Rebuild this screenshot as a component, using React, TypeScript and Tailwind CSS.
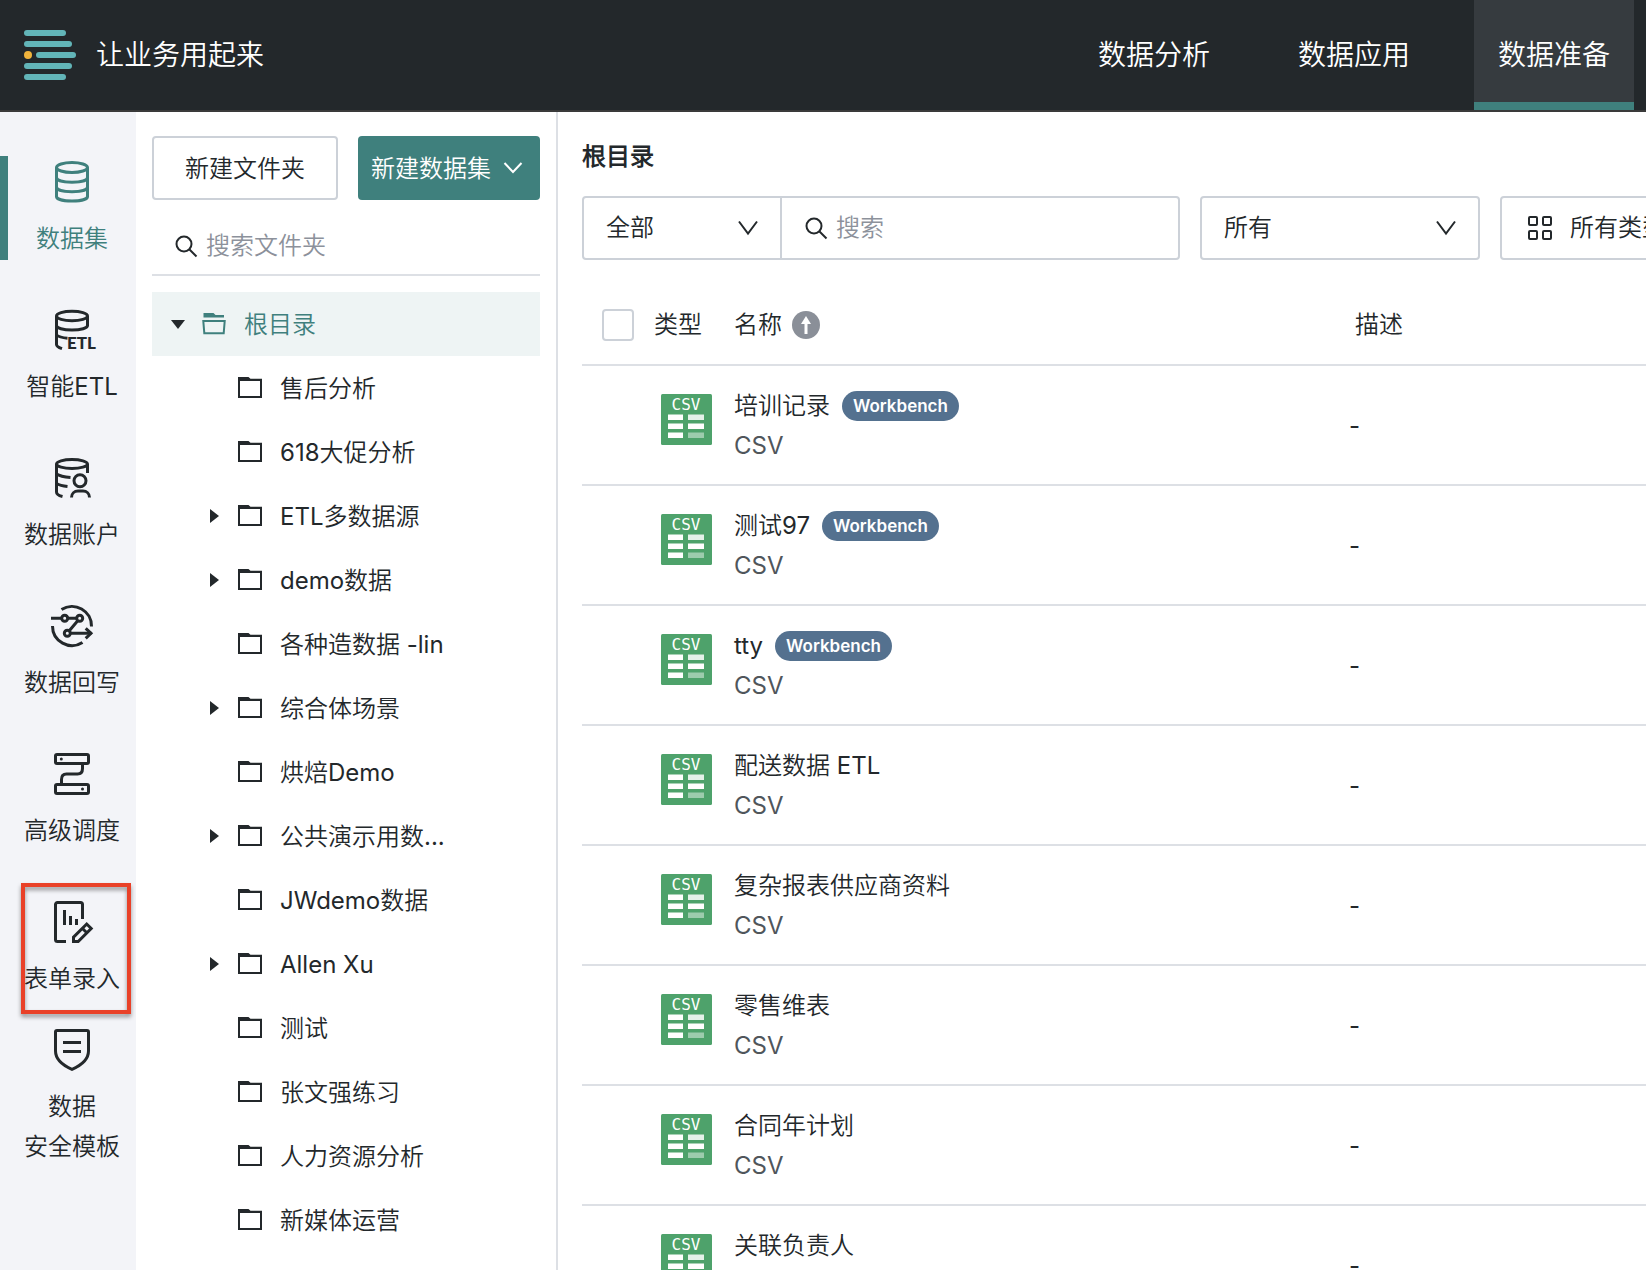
import type { ReactNode } from "react";
import clsx from "clsx";

const NAV_ITEMS = [
  { label: "数据分析", active: false },
  { label: "数据应用", active: false },
  { label: "数据准备", active: true },
];

interface SideItem {
  lines: string[];
  icon: ReactNode;
  active?: boolean;
  marked?: boolean;
}

const SIDE_ITEMS: SideItem[] = [
  {
    lines: ["数据集"],
    active: true,
    icon: (
      <>
        <ellipse cx="22" cy="7.5" rx="15.5" ry="5" />
        <path d="M6.5 7.5v29c0 2.6 6.5 4.5 15.5 4.5s15.5-1.9 15.5-4.5v-29" />
        <path d="M6.5 17.5c0 2.8 6.5 4.7 15.5 4.7s15.5-1.9 15.5-4.7" />
        <path d="M6.5 27c0 2.8 6.5 4.7 15.5 4.7s15.5-1.9 15.5-4.7" />
      </>
    ),
  },
  {
    lines: ["智能ETL"],
    icon: (
      <>
        <ellipse cx="22" cy="8" rx="15.5" ry="4.7" />
        <path d="M37.5 8v9.5c0 2.5-6.5 4.5-15.5 4.5S6.5 20 6.5 17.5" />
        <path d="M6.5 8v28.5c0 2 2 3 5.5 4.2M6.5 27c2 1.8 6 2.8 11 3.2" />
        <text
          className="font-['Lato',sans-serif] text-[17px] font-black"
          fill="currentColor"
          stroke="none"
          x="17"
          y="41"
        >
          ETL
        </text>
      </>
    ),
  },
  {
    lines: ["数据账户"],
    icon: (
      <>
        <ellipse cx="22" cy="8" rx="15.5" ry="4.5" />
        <path d="M37.5 8v9M6.5 8v28c0 2.5 2 3.5 6 4.5" />
        <path d="M6.5 18c3 2 8 3 14 3.5M6.5 27.5c3 1.8 6.5 2.5 11 3" />
        <circle cx="30" cy="24.7" r="6" />
        <path d="M21.5 41.5c0-4 3-6.5 6.5-6.5h5c3.5 0 6.5 2.5 6.5 6.5" />
      </>
    ),
  },
  {
    lines: ["数据回写"],
    icon: (
      <>
        <path d="M11.5 5.5A19.5 19.5 0 0 1 41.5 22.5" />
        <path d="M2.5 22A19.5 19.5 0 0 0 32.5 38.5" />
        <path d="M1 14.3h10.5M18 14.3h8.5M27.5 17l-8 9.5M20.5 29.3h21" />
        <path d="M35.7 24.3l5.3 5-5.3 5" />
        <circle cx="14.7" cy="14.3" r="3" />
        <circle cx="29.7" cy="14.3" r="3" />
        <circle cx="17.3" cy="29.3" r="3" />
      </>
    ),
  },
  {
    lines: ["高级调度"],
    icon: (
      <>
        <rect height="9" rx="1.5" width="33" x="5.5" y="2.5" />
        <rect height="9" rx="1.5" width="33" x="5.5" y="32.5" />
        <path d="M32.5 12v4.5c0 3.5-1.5 5.5-5 5.5h-11c-3.5 0-5 2-5 5.5V32" />
        <circle cx="11.3" cy="7" fill="currentColor" r="1.5" stroke="none" />
        <circle cx="32.5" cy="37" fill="currentColor" r="1.5" stroke="none" />
      </>
    ),
  },
  {
    lines: ["表单录入"],
    marked: true,
    icon: (
      <>
        <path d="M32.5 19V4.5a2 2 0 0 0-2-2h-23a2 2 0 0 0-2 2v35a2 2 0 0 0 2 2H16" />
        <path d="M14.5 10v15M20.5 16v9M26.5 19v6" />
        <path d="M23.5 41.5v-4.3L36.7 24l4.5 4.5-13 13z" />
        <path d="M32.5 28.5l4.3 4.3" />
      </>
    ),
  },
  {
    lines: ["数据", "安全模板"],
    icon: (
      <>
        <path d="M7 2.5h30A1.5 1.5 0 0 1 38.5 4v19c0 9-6.5 14-16.5 18.3C12 37 5.5 32 5.5 23V4A1.5 1.5 0 0 1 7 2.5z" />
        <path d="M13 14.5h18M13 23.5h18" />
      </>
    ),
  },
];

const FOLDERS = [
  { name: "售后分析", expandable: false },
  { name: "618大促分析", expandable: false },
  { name: "ETL多数据源", expandable: true },
  { name: "demo数据", expandable: true },
  { name: "各种造数据 -lin", expandable: false },
  { name: "综合体场景", expandable: true },
  { name: "烘焙Demo", expandable: false },
  { name: "公共演示用数...", expandable: true },
  { name: "JWdemo数据", expandable: false },
  { name: "Allen Xu", expandable: true },
  { name: "测试", expandable: false },
  { name: "张文强练习", expandable: false },
  { name: "人力资源分析", expandable: false },
  { name: "新媒体运营", expandable: false },
];

const DATASETS = [
  { name: "培训记录", workbench: true },
  { name: "测试97", workbench: true },
  { name: "tty", workbench: true },
  { name: "配送数据 ETL", workbench: false },
  { name: "复杂报表供应商资料", workbench: false },
  { name: "零售维表", workbench: false },
  { name: "合同年计划", workbench: false },
  { name: "关联负责人", workbench: false },
];

function Logo() {
  return (
    <svg className="h-[50px] w-[52px]" fill="#62b5b8" viewBox="0 0 52 50">
      <rect height="6" rx="3" width="42" />
      <rect height="6" rx="3" width="48" y="11" />
      <rect height="6" rx="3" width="40" x="12" y="22" />
      <rect height="6" rx="3" width="48" y="33" />
      <rect height="6" rx="3" width="42" y="44" />
      <circle cx="4" cy="25" fill="#f0b43c" r="4" />
    </svg>
  );
}

function SearchIcon() {
  return (
    <svg
      className="size-6 shrink-0"
      fill="none"
      stroke="currentColor"
      strokeWidth="2"
      viewBox="0 0 24 24"
    >
      <circle cx="10" cy="10" r="7.5" />
      <path d="M15.5 15.5l7 7" />
    </svg>
  );
}

function Chevron({ className }: { className?: string }) {
  return (
    <svg
      className={clsx("h-4 w-5", className)}
      fill="none"
      stroke="currentColor"
      strokeWidth="2"
      viewBox="0 0 20 16"
    >
      <path d="M1 1.5l9 12 9-12" />
    </svg>
  );
}

function Caret({ open }: { open?: boolean }) {
  return (
    <svg className="size-4 shrink-0" fill="#23282b" viewBox="0 0 16 16">
      <path d={open ? "M1 4h14L8 13z" : "M4 1v14l9-7z"} />
    </svg>
  );
}

function FolderIcon({ open }: { open?: boolean }) {
  return (
    <svg
      className="size-6 shrink-0"
      fill="none"
      stroke="currentColor"
      strokeWidth="2"
      viewBox="0 0 24 24"
    >
      {open ? (
        <>
          <path d="M1.5 1h10l2 2H22v2.500H1.500z" fill="currentColor" stroke="none" />
          <path d="M1.3 9h21.400l-1 12.200H2.300z" />
        </>
      ) : (
        <>
          <path d="M0 1h10.500l2 1.800H24v2H0z" fill="currentColor" stroke="none" />
          <path d="M1 4h22v17H1z" />
        </>
      )}
    </svg>
  );
}

function CsvIcon() {
  return (
    <svg className="size-[51px]" fill="#fff" viewBox="0 0 51 51">
      <rect fill="#4ea26b" height="51" rx="1.5" width="51" />
      <text
        className="font-['DejaVu_Sans_Mono',monospace] text-[16px]"
        textAnchor="middle"
        x="25"
        y="16"
      >
        CSV
      </text>
      <path d="M7 20.5h15V26H7zM7 29.5h15V35H7zM27 29.5h16V35H27zM7 38.5h15V44H7z" />
      <path d="M27 20.5h16V26H27z" opacity="0.85" />
      <path d="M27 38.5h16V44H27z" opacity="0.45" />
    </svg>
  );
}

function Header() {
  return (
    <header className="flex shrink-0 items-stretch justify-between border-b-2 border-[#3a3a3a] bg-[#23282b] pr-3 pl-6 text-[28px] text-white">
      <div className="flex items-center gap-5">
        <Logo />
        <span className="pt-0.5">让业务用起来</span>
      </div>
      <nav className="flex gap-10">
        {NAV_ITEMS.map(({ label, active }) => (
          <a
            className={clsx(
              "flex h-[110px] items-center border-b-8 px-6 pt-2.5",
              active ? "border-[#3f807d] bg-[#363b3f]" : "border-transparent"
            )}
            href="#"
            key={label}
          >
            {label}
          </a>
        ))}
      </nav>
    </header>
  );
}

function SideMenu() {
  return (
    <aside className="flex w-[136px] shrink-0 flex-col bg-[#f3f4f8] pt-[22px]">
      {SIDE_ITEMS.map(({ lines, icon, active, marked }) => (
        <div
          className="relative flex h-[148px] shrink-0 flex-col justify-center"
          key={lines.join("")}
        >
          <a
            className={clsx(
              "flex flex-col items-center border-l-8 pt-1 pb-px",
              active ? "border-[#3f807d] text-[#3f807d]" : "border-transparent"
            )}
            href="#"
          >
            <svg
              className="mb-[15px] size-11 overflow-visible"
              fill="none"
              stroke="currentColor"
              strokeWidth="3"
              viewBox="0 0 44 44"
            >
              {icon}
            </svg>
            {lines.map((line) => (
              <span className="leading-10 whitespace-nowrap" key={line}>
                {line}
              </span>
            ))}
          </a>
          {marked && (
            <div className="pointer-events-none absolute top-[9px] right-[5px] bottom-2 left-[21px] border-4 border-[#e94128] drop-shadow-[0_3px_2px_rgba(0,0,0,0.4)]" />
          )}
        </div>
      ))}
    </aside>
  );
}

function FolderPanel() {
  return (
    <section className="w-[422px] shrink-0 border-r-2 border-[#dde0e5] pt-6 pr-4 pl-4">
      <div className="flex gap-5">
        <button
          className="h-16 w-[186px] rounded border-2 border-[#ccd1d8] pt-0.5"
          type="button"
        >
          新建文件夹
        </button>
        <button
          className="flex h-16 flex-1 items-center gap-3 rounded bg-[#3f807d] pl-[13px] text-white"
          type="button"
        >
          <span className="pt-0.5">新建数据集</span>
          <svg
            className="h-3 w-5"
            fill="none"
            stroke="currentColor"
            strokeWidth="2"
            viewBox="0 0 20 12"
          >
            <path d="M1.5 1l8.5 9 8.5-9" />
          </svg>
        </button>
      </div>

      <label className="mt-4 flex h-[60px] items-center gap-2 border-b-2 border-[#dde0e5] pt-0.5 pl-[22px]">
        <SearchIcon />
        <input
          aria-label="搜索文件夹"
          className="min-w-0 flex-1 outline-none placeholder:text-[#8c919b]"
          placeholder="搜索文件夹"
          type="text"
        />
      </label>

      <ul className="mt-4">
        <li>
          <button
            className="flex h-16 w-full items-center bg-[#eef4f4] pl-[18px] text-[#3f807d]"
            type="button"
          >
            <Caret open />
            <span className="mr-[18px] ml-4">
              <FolderIcon open />
            </span>
            <span className="pt-0.5">根目录</span>
          </button>
        </li>
        {FOLDERS.map(({ name, expandable }) => (
          <li key={name}>
            <button
              className="flex h-16 w-full items-center pl-[54px] whitespace-nowrap"
              type="button"
            >
              <span className="size-4">{expandable && <Caret />}</span>
              <span className="mr-[18px] ml-4">
                <FolderIcon />
              </span>
              <span className="pt-0.5">{name}</span>
            </button>
          </li>
        ))}
      </ul>
    </section>
  );
}

function Filters() {
  return (
    <div className="mt-[21px] flex gap-5">
      <div className="flex h-16 w-[598px] shrink-0 rounded border-2 border-[#ccd1d8]">
        <div className="relative w-[198px] shrink-0 border-r-2 border-[#ccd1d8]">
          <select
            aria-label="范围"
            className="size-full appearance-none pl-[22px] outline-none"
          >
            <option>全部</option>
          </select>
          <Chevron className="pointer-events-none absolute top-[22px] right-[22px]" />
        </div>
        <label className="flex min-w-0 flex-1 items-center gap-2 pl-[22px]">
          <SearchIcon />
          <input
            aria-label="搜索"
            className="min-w-0 flex-1 outline-none placeholder:text-[#8c919b]"
            placeholder="搜索"
            type="text"
          />
        </label>
      </div>

      <div className="relative h-16 w-[280px] shrink-0">
        <select
          aria-label="所有者"
          className="size-full appearance-none rounded border-2 border-[#ccd1d8] pl-[22px] outline-none"
        >
          <option>所有</option>
        </select>
        <Chevron className="pointer-events-none absolute top-6 right-6" />
      </div>

      <label className="flex h-16 w-[280px] shrink-0 items-center rounded border-2 border-[#ccd1d8] pl-[26px]">
        <svg
          className="mr-[18px] size-6 shrink-0"
          fill="none"
          stroke="currentColor"
          strokeWidth="2"
          viewBox="0 0 24 24"
        >
          <rect height="8" rx="1" width="8" x="1" y="1" />
          <rect height="8" rx="1" width="8" x="15" y="1" />
          <rect height="8" rx="1" width="8" x="1" y="15" />
          <rect height="8" rx="1" width="8" x="15" y="15" />
        </svg>
        <select
          aria-label="数据集类型"
          className="h-full flex-1 appearance-none outline-none"
        >
          <option>所有类型</option>
        </select>
      </label>
    </div>
  );
}

function DatasetTable() {
  return (
    <table className="mt-[25px] w-[1300px] table-fixed text-left">
      <colgroup>
        <col className="w-[72px]" />
        <col className="w-20" />
        <col className="w-[614px]" />
        <col />
      </colgroup>
      <thead>
        <tr className="h-20 border-b-2 border-[#dde0e5]">
          <th className="pl-5">
            <input
              aria-label="全选"
              className="block size-8 appearance-none rounded border-2 border-[#ccd1d8]"
              type="checkbox"
            />
          </th>
          <th className="font-normal">类型</th>
          <th className="font-normal">
            <button className="flex items-center gap-2.5" type="button">
              名称
              <svg className="size-7" viewBox="0 0 28 28">
                <circle cx="14" cy="14" fill="#8a8f98" r="14" />
                <path d="M14 5l5 8h-3.500v10h-3V13H9z" fill="#fff" />
              </svg>
            </button>
          </th>
          <th className="pl-[7px] font-normal">描述</th>
        </tr>
      </thead>
      <tbody>
        {DATASETS.map(({ name, workbench }) => (
          <tr className="h-[120px] border-b-2 border-[#dde0e5]" key={name}>
            <td />
            <td className="pt-7 pl-[7px] align-top">
              <CsvIcon />
            </td>
            <td className="pt-5 align-top leading-10">
              <div className="flex items-center gap-3">
                {name}
                {workbench && (
                  <span className="flex h-[30px] items-center rounded-full bg-[#54718f] px-[11px] text-[17px] font-semibold text-white">
                    Workbench
                  </span>
                )}
              </div>
              <div className="text-[#50565b]">CSV</div>
            </td>
            <td className="pt-0.5 pl-px">-</td>
          </tr>
        ))}
      </tbody>
    </table>
  );
}

export default function App() {
  return (
    <div className="flex h-screen flex-col overflow-hidden bg-white font-['Inter','Noto_Sans_CJK_SC_DemiLight','Noto_Sans_CJK_SC',sans-serif] text-2xl text-[#23282b]">
      <Header />
      <div className="flex min-h-0 flex-1">
        <SideMenu />
        <FolderPanel />
        <main className="min-w-0 flex-1 overflow-hidden pt-[27px] pl-6">
          <h1 className="font-bold leading-9">根目录</h1>
          <Filters />
          <DatasetTable />
        </main>
      </div>
    </div>
  );
}
